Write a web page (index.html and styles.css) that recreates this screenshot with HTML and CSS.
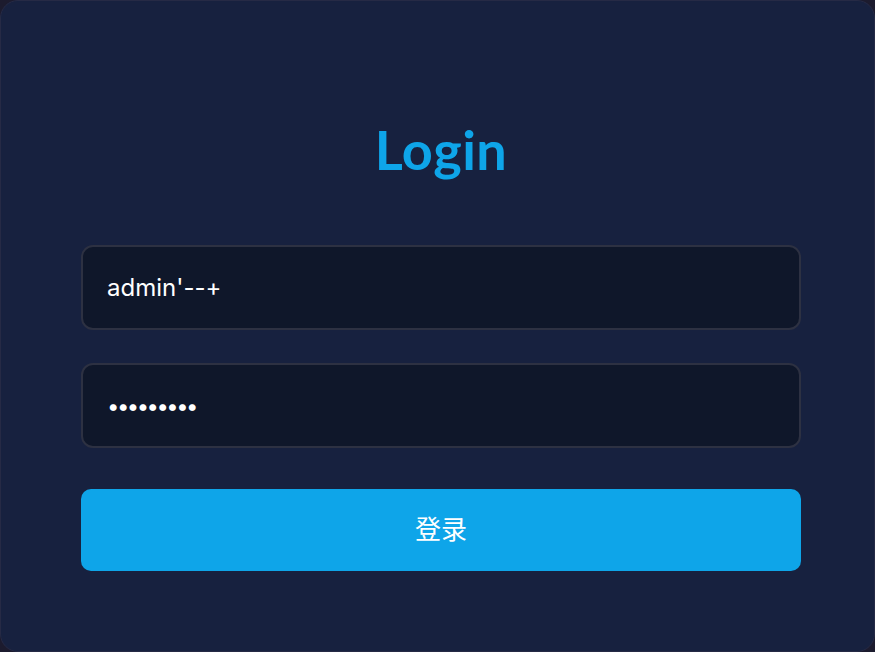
FILE: index.html
```html
<!DOCTYPE html>
<html lang="zh">
<head>
<meta charset="utf-8">
<title>Login</title>
<link rel="stylesheet" href="styles.css">
</head>
<body>
<div class="card">
  <h1 class="title">Login</h1>
  <form class="form">
    <div class="field"><span class="value">admin'--+</span></div>
    <div class="field"><span class="value dots">•••••••••</span></div>
    <button type="button" class="btn">登录</button>
  </form>
</div>
</body>
</html>
```
FILE: styles.css
```css
html, body {
  margin: 0;
  padding: 0;
  background: #1c1b2e;
  height: 652px;
  overflow: hidden;
}
.card {
  box-sizing: border-box;
  height: 652px;
  width: 875px;
  background: #17213f;
  border: 1px solid #262a45;
  border-radius: 18px;
  padding: 117px 73px 0 80px;
  display: flex;
  flex-direction: column;
  font-family: "Inter", "Noto Sans CJK SC", sans-serif;
}
.title {
  margin: 0;
  text-align: center;
  color: #0ea5e9;
  font-family: "Lato", "Inter", sans-serif;
  font-weight: 700;
  font-size: 54px;
  line-height: 64px;
  letter-spacing: 0.5px;
}
.form {
  margin-top: 63px;
  display: flex;
  flex-direction: column;
}
.field {
  box-sizing: border-box;
  height: 85px;
  background: #0f172a;
  border: 2px solid #2d3142;
  border-radius: 12px;
  padding: 0 24px;
  display: flex;
  align-items: center;
  margin-bottom: 33px;
}
.value {
  color: #ffffff;
  font-size: 24px;
  font-family: "Inter", sans-serif;
}
.dots {
  font-size: 22px;
  letter-spacing: -2.5px;
}
.btn {
  margin-top: 8px;
  height: 82px;
  border: none;
  border-radius: 10px;
  background: #0ea5e9;
  color: #ffffff;
  font-size: 26px;
  padding: 0 0 5px 0;
  font-family: "Noto Sans CJK SC", sans-serif;
}
```
